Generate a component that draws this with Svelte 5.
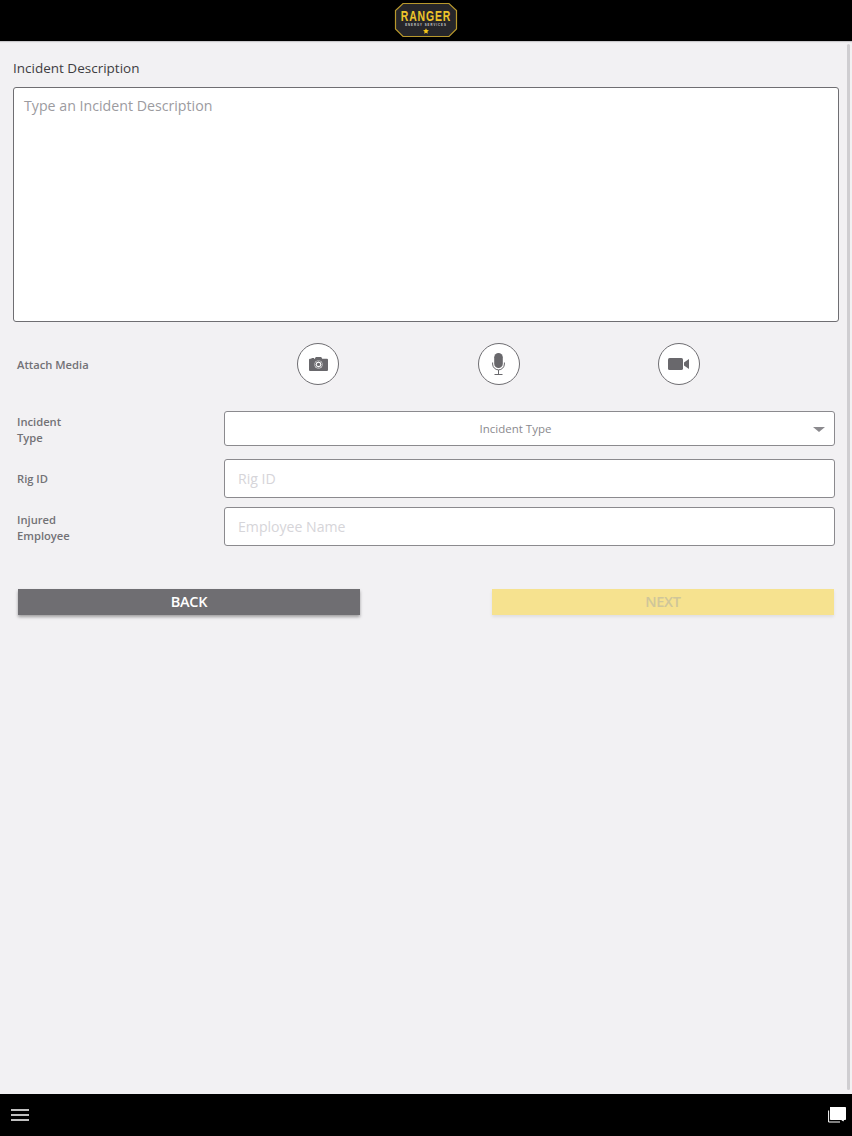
<script>
  const rows = [
    { label: ['Rig ID'], placeholder: 'Rig ID' },
    { label: ['Injured', 'Employee'], placeholder: 'Employee Name' }
  ];
</script>

<div class="page">
  <header class="top">
    <svg class="logo" width="64" height="37" viewBox="0 0 64 37" aria-label="Ranger Energy Services">
      <path d="M9 2.5 H55 L62.5 9.5 V28 L55 35.5 H9 L1.5 28 V9.5 Z" fill="#26262a" stroke="#b8982c" stroke-width="1.2" />
      <text transform="translate(32 20) scale(.72 1)" text-anchor="middle" class="logo-name">RANGER</text>
      <text x="32" y="25.2" text-anchor="middle" class="logo-sub">ENERGY SERVICES</text>
      <path d="M32 27.2 l.9 1.9 2 .2 -1.5 1.4 .4 2 -1.8 -1 -1.8 1 .4 -2 -1.5 -1.4 2 -.2 Z" fill="#f5c518" />
    </svg>
  </header>

  <main class="content">
    <h1 class="title">Incident Description</h1>
    <textarea class="description" placeholder="Type an Incident Description"></textarea>

    <div class="media">
      <span class="label">Attach Media</span>
      <div class="media-buttons">
        <button class="round" aria-label="Camera">
          <svg width="19" height="14" viewBox="0 0 19 14">
            <path fill-rule="evenodd" d="M1 1.8 H2.5 V1 H5 V1.8 H5.8 L6.8 0 H12.2 L13.2 1.8 H18 A1 1 0 0 1 19 2.8 V13 A1 1 0 0 1 18 14 H1 A1 1 0 0 1 0 13 V2.8 A1 1 0 0 1 1 1.8 Z M9.5 3.4 A4 4 0 1 0 9.5 11.4 A4 4 0 1 0 9.5 3.4 Z" fill="#69686c" />
            <circle cx="9.5" cy="7.4" r="3.3" fill="none" stroke="#69686c" stroke-width=".9" />
            <circle cx="9.5" cy="7.4" r="1.7" fill="#69686c" />
          </svg>
        </button>
        <button class="round" aria-label="Microphone">
          <svg width="13" height="22" viewBox="0 0 13 22">
            <rect x="2.2" y="0" width="8.6" height="15" rx="4.3" fill="#69686c" />
            <path d="M.6 9.5 V11 A5.9 5.9 0 0 0 12.4 11 V9.5 M6.5 17 V21 M2.5 21.5 H10.5" fill="none" stroke="#69686c" stroke-width="1" />
          </svg>
        </button>
        <button class="round" aria-label="Video">
          <svg width="22" height="14" viewBox="0 0 22 14">
            <rect x="0" y="1" width="15" height="12" rx="1.6" fill="#69686c" />
            <path d="M16 5.5 L21 2 V12 L16 8.5 Z" fill="#69686c" />
          </svg>
        </button>
      </div>
    </div>

    <div class="form">
      <div class="row select-row">
        <span class="label two-line">Incident<br />Type</span>
        <div class="select">
          <span>Incident Type</span>
          <i class="caret"></i>
        </div>
      </div>
      {#each rows as row}
        <div class="row">
          <span class="label" class:two-line={row.label.length > 1}>
            {#each row.label as line, i}{#if i}<br />{/if}{line}{/each}
          </span>
          <input class="field" placeholder={row.placeholder} />
        </div>
      {/each}
    </div>

    <div class="actions">
      <button class="btn back">BACK</button>
      <button class="btn next">NEXT</button>
    </div>
  </main>

  <footer class="bottom">
    <svg width="18" height="12" viewBox="0 0 18 12" aria-label="Menu">
      <path d="M0 1 H18 M0 6 H18 M0 11 H18" stroke="#fff" stroke-width="1.6" />
    </svg>
    <svg width="18" height="18" viewBox="0 0 18 18" aria-label="Messages">
      <path d="M2 1 H17.2 A.8 .8 0 0 1 18 1.8 V13.2 A.8 .8 0 0 1 17.2 14 H16 L15.4 15.6 L13.2 14 H2.8 A.8 .8 0 0 1 2 13.2 Z" fill="#fff" />
      <path d="M.6 4.5 V16 H12" fill="none" stroke="#fff" stroke-width="1" />
    </svg>
  </footer>

  <div class="scrollbar"></div>
</div>

<style>
  :global(body) {
    margin: 0;
    background: #f2f1f3;
  }

  .page {
    position: relative;
    width: 852px;
    height: 1136px;
    display: flex;
    flex-direction: column;
    font-family: "Open Sans", "Liberation Sans", sans-serif;
    color: #69686c;
    background: #f2f1f3;
  }

  .top {
    height: 41px;
    flex: none;
    display: flex;
    justify-content: center;
    align-items: flex-start;
    padding-top: 1px;
    box-sizing: border-box;
    background: #000;
    box-shadow: 0 1px 1px #c9c8cb;
  }

  .logo-name {
    font-family: "Liberation Sans", sans-serif;
    font-size: 14.5px;
    font-weight: 700;
    letter-spacing: 1.2px;
    fill: #eec42a;
  }

  .logo-sub {
    font-family: "Liberation Sans", sans-serif;
    font-size: 2.8px;
    font-weight: 700;
    letter-spacing: 1px;
    fill: #cfcfcf;
  }

  .content {
    flex: 1;
    min-height: 0;
    padding: 17px 13px 0;
  }

  .title {
    margin: 0 0 9px;
    font-size: 13.5px;
    line-height: 20px;
    font-weight: 500;
    color: #3e3d41;
  }

  .description {
    display: block;
    width: 826px;
    height: 235px;
    box-sizing: border-box;
    margin: 0;
    padding: 8px 10px;
    resize: none;
    outline: none;
    background: #fff;
    border: 1px solid #6f6e72;
    border-radius: 3px;
    font: 400 14.2px/20px "Open Sans", sans-serif;
  }

  .description::placeholder {
    color: #9c9b9f;
    opacity: 1;
  }

  .media {
    display: flex;
    align-items: center;
    margin-top: 21px;
    height: 42px;
    padding-left: 4px;
  }

  .label {
    font-size: 11.2px;
    line-height: 16px;
    font-weight: 600;
    color: #737276;
  }

  .two-line {
    padding-top: 3px;
  }

  .media .label {
    width: 280px;
    flex: none;
    padding-top: 2px;
  }

  .media-buttons {
    display: flex;
    gap: 138.5px;
  }

  .round {
    width: 42px;
    height: 42px;
    flex: none;
    box-sizing: border-box;
    padding: 0;
    display: flex;
    align-items: center;
    justify-content: center;
    background: #fff;
    border: 1px solid #6f6e72;
    border-radius: 50%;
  }

  .form {
    margin-top: 26px;
    display: flex;
    flex-direction: column;
    gap: 9px;
    padding-left: 4px;
  }

  .row {
    display: flex;
    align-items: center;
    height: 39px;
  }

  .row .label {
    width: 207px;
    flex: none;
  }

  .select-row {
    height: 35px;
    margin-bottom: 4px;
  }

  .select {
    width: 611px;
    height: 35px;
    box-sizing: border-box;
    position: relative;
    display: flex;
    align-items: center;
    justify-content: center;
    padding-right: 28px;
    background: #fff;
    border: 1px solid #8b8a8e;
    border-radius: 3px;
    font-size: 11.5px;
    color: #8b8a8e;
  }

  .caret {
    position: absolute;
    right: 9px;
    top: 15px;
    width: 0;
    height: 0;
    border-left: 6px solid transparent;
    border-right: 6px solid transparent;
    border-top: 5px solid #8b8a8e;
  }

  .field {
    width: 611px;
    height: 39px;
    box-sizing: border-box;
    margin: 0;
    padding: 0 13px;
    outline: none;
    background: #fff;
    border: 1px solid #8b8a8e;
    border-radius: 3px;
    font: 400 14.1px "Open Sans", sans-serif;
  }

  .field::placeholder {
    color: #d6d5d9;
    opacity: 1;
  }

  .actions {
    display: flex;
    justify-content: space-between;
    width: 816px;
    margin: 43px 0 0 5px;
  }

  .btn {
    width: 342px;
    height: 26px;
    padding: 0 0 1.5px;
    border: none;
    font: 600 14.5px "Open Sans", sans-serif;
    letter-spacing: -.3px;
  }

  .back {
    background: #6f6e72;
    color: #fff;
    box-shadow: 0 2px 3px rgba(0, 0, 0, .35);
  }

  .next {
    background: #f6e28f;
    color: #cfc69a;
    box-shadow: 0 2px 3px rgba(0, 0, 0, .08);
  }

  .bottom {
    height: 42px;
    flex: none;
    display: flex;
    align-items: center;
    justify-content: space-between;
    padding: 0 6px 0 11px;
    background: #000;
  }

  .scrollbar {
    position: absolute;
    top: 44px;
    right: 2px;
    width: 3px;
    height: 1046px;
    border-radius: 2px;
    background: #cfced1;
  }
</style>
